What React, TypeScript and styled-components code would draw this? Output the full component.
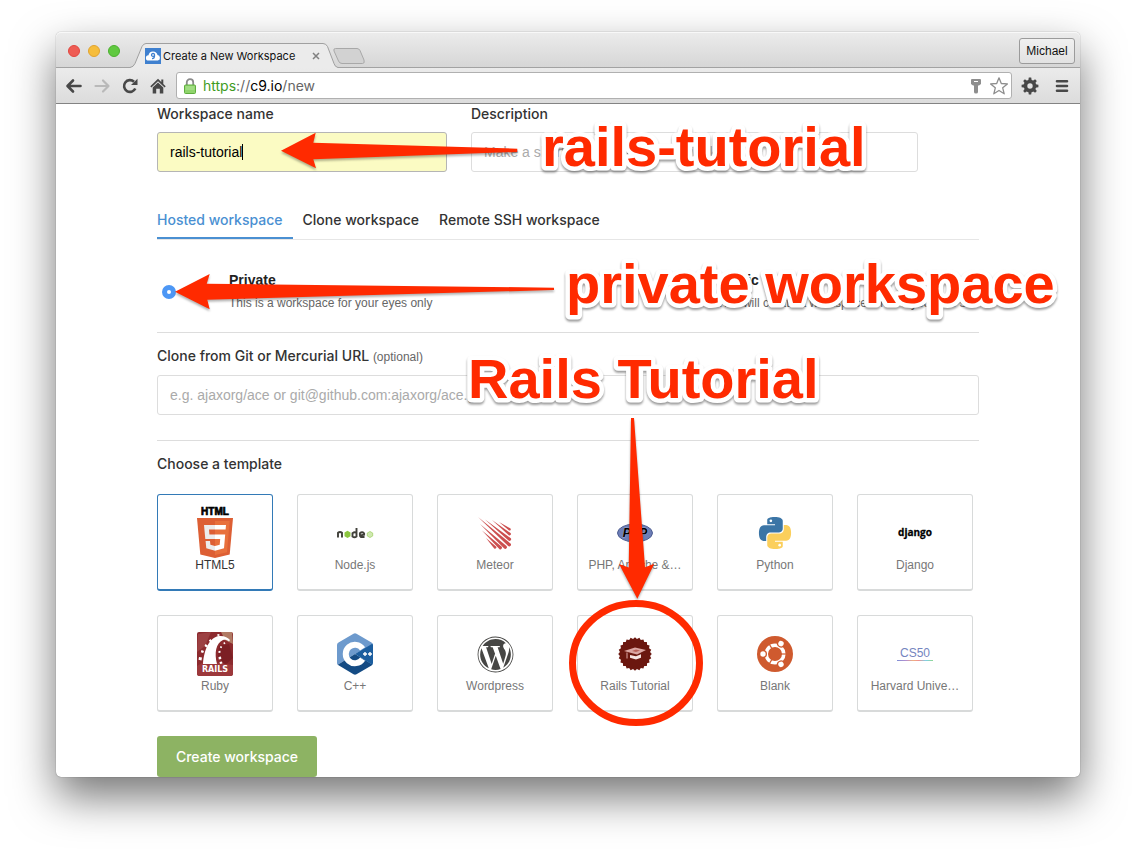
import React, { useState } from "react";
import styled, { createGlobalStyle } from "styled-components";
import { FaWordpress } from "react-icons/fa";

const GlobalStyle = createGlobalStyle`
  *, *::before, *::after { box-sizing: border-box; }
  body {
    margin: 0;
    background: #fff;
    color: #333;
    font-family: "Liberation Sans", Arial, Helvetica, sans-serif;
    font-size: 14px;
    line-height: 20px;
  }
  button, input { font: inherit; color: inherit; }
`;

const Desktop = styled.div`
  padding: 32px 56px 80px;
`;

const BrowserWindow = styled.div`
  position: relative;
  border-radius: 5px;
  background: #fff;
  box-shadow: 0 0 1px rgba(0, 0, 0, 0.6), 0 20px 44px rgba(0, 0, 0, 0.54);
`;

/* ---------- browser chrome ---------- */

const TitleBar = styled.header`
  display: flex;
  align-items: flex-end;
  height: 36px;
  padding: 0 5px 0 12px;
  border-bottom: 1px solid #a2a2a2;
  border-radius: 5px 5px 0 0;
  background: linear-gradient(#ececec, #d6d6d6);
  box-shadow: inset 0 1px 0 #f8f8f8;
`;

const TrafficLights = styled.div`
  display: flex;
  gap: 8px;
  margin: 0 10px 10px 0;
`;

const Light = styled.button<{ $color: string; $edge: string }>`
  width: 12px;
  height: 12px;
  padding: 0;
  border: 1px solid ${(p) => p.$edge};
  border-radius: 50%;
  background: ${(p) => p.$color};
`;

const Tab = styled.div`
  position: relative;
  display: flex;
  align-items: center;
  width: 208px;
  height: 25px;
  margin-bottom: -1px;
  padding: 0 18px 0 15px;
  font-family: Inter, sans-serif;
  font-size: 11px;
  color: #111;
`;

const TabShape = styled.svg`
  position: absolute;
  inset: 0;
`;

const Favicon = styled.svg`
  position: relative;
  margin-right: 2px;
`;

const TabTitle = styled.span`
  position: relative;
  flex: 1;
  white-space: nowrap;
`;

const TabClose = styled.button`
  position: relative;
  display: flex;
  padding: 0;
  border: 0;
  background: none;
`;

const NewTab = styled.button`
  display: flex;
  margin: 0 0 2px -6px;
  padding: 0;
  border: 0;
  background: none;
`;

const ProfileButton = styled.button`
  min-width: 56px;
  height: 26px;
  margin: 0 0 3px auto;
  padding: 0 6px;
  border: 1px solid #9b9b9b;
  border-radius: 3px;
  background: linear-gradient(#f0f0f0, #e2e2e2);
  font-size: 12px;
  color: #111;
`;

const Toolbar = styled.nav`
  display: flex;
  align-items: center;
  height: 36px;
  padding: 0 4px;
  border-bottom: 1px solid #838383;
  background: linear-gradient(#ebebeb, #dcdcdc);
`;

const ToolButton = styled.button`
  display: flex;
  justify-content: center;
  width: 28px;
  padding: 0;
  border: 0;
  background: none;
`;

const TrailingTools = styled.div`
  display: flex;
  align-items: center;
  gap: 4px;
  margin-left: 4px;
`;

const Omnibox = styled.div`
  display: flex;
  flex: 1;
  align-items: center;
  gap: 7px;
  height: 27px;
  margin-left: 4px;
  padding: 0 2px 0 7px;
  border: 1px solid #b0b0b0;
  border-radius: 3px;
  background: #fff;
`;

const Address = styled.div`
  flex: 1;
  font-family: Inter, sans-serif;
  font-size: 14px;
  color: #666;
  outline: none;
`;

const Scheme = styled.span`
  color: #3f9c1f;
`;

const Host = styled.span`
  color: #000;
`;

/* ---------- workspace form ---------- */

const Form = styled.form`
  padding: 0 101px;
`;

const medium = `
  font-family: Inter, sans-serif;
  font-size: 14px;
  font-weight: 500;
  line-height: 20px;
`;

const FieldRow = styled.div`
  display: flex;
  gap: 24px;
  padding-right: 61px;
`;

const Field = styled.div<{ $grow?: number }>`
  flex: ${(p) => p.$grow ?? 1} 1 0;
  min-width: 0;
`;

const FieldLabel = styled.label`
  display: block;
  margin-bottom: 8px;
  ${medium}
`;

const Optional = styled.small`
  font-family: "Liberation Sans", Arial, sans-serif;
  font-size: 12px;
  font-weight: 400;
  color: #666;
`;

const TextInput = styled.input`
  display: block;
  width: 100%;
  height: 40px;
  padding: 0 12px;
  border: 1px solid #ddd;
  border-radius: 3px;
  background: #fff;
  outline: none;
  &::placeholder { color: #aaa; }
`;

const FocusedBox = styled.div`
  display: flex;
  align-items: center;
  height: 40px;
  padding: 0 12px;
  border: 1px solid #b5b5b5;
  border-radius: 3px;
  background: #fbfbc3;
  color: #000;
`;

const BareInput = styled.input`
  field-sizing: content;
  padding: 0;
  border: 0;
  background: none;
  outline: none;
  caret-color: transparent;
`;

const Caret = styled.span`
  width: 1px;
  height: 16px;
  background: #000;
`;

const Tabs = styled.div`
  display: flex;
  margin-top: 38px;
  border-bottom: 1px solid #e6e6e6;
`;

const TabButton = styled.button<{ $active?: boolean }>`
  padding: 0 10px 7px;
  border: 0;
  border-bottom: 2px solid ${(p) => (p.$active ? "#4a90d2" : "transparent")};
  background: none;
  color: ${(p) => (p.$active ? "#4a90d2" : "#333")};
  ${medium}
  &:first-child { padding-left: 0; }
`;

const Section = styled.section<{ $last?: boolean }>`
  padding: 13px 0 ${(p) => (p.$last ? 0 : 25)}px;
  border-bottom: ${(p) => (p.$last ? 0 : 1)}px solid #ddd;
`;

const Visibility = styled.fieldset`
  display: grid;
  grid-template-columns: 3fr 2fr;
  margin: 0;
  padding: 30px 0 19px;
  border: 0;
  border-bottom: 1px solid #ddd;
`;

const Choice = styled.label`
  display: flex;
  align-items: center;
  gap: 53px;
  padding-left: 5px;
  white-space: nowrap;
`;

const Radio = styled.input`
  flex: none;
  appearance: none;
  width: 14px;
  height: 14px;
  margin: 0;
  border: 1px solid #bbb;
  border-radius: 50%;
  background: #fff;
  &:checked { border: 5px solid #4d97f5; }
`;

const ChoiceText = styled.span`
  display: grid;
  gap: 3px;
  font-size: 12px;
  color: #666;
`;

const ChoiceName = styled.strong`
  font-size: 14px;
  color: #222;
`;

const Heading = styled.h2`
  margin: 0 0 20px;
  ${medium}
`;

const TemplateGrid = styled.div`
  display: grid;
  grid-template-columns: repeat(auto-fill, 116px);
  gap: 24px;
`;

const TemplateCard = styled.button<{ $selected?: boolean }>`
  display: flex;
  flex-direction: column;
  align-items: center;
  height: 97px;
  padding: 13px 9px 0;
  border: 1px solid ${(p) => (p.$selected ? "#337ab7" : "#d8dada")};
  border-bottom-width: 2px;
  border-radius: 3px;
  background: #fff;
  font-size: 12px;
  line-height: 14px;
  color: ${(p) => (p.$selected ? "#333" : "#777")};
`;

const LogoArea = styled.span`
  display: flex;
  align-items: center;
  justify-content: center;
  height: 50px;
  svg { overflow: visible; }
`;

const TemplateName = styled.span`
  white-space: nowrap;
`;

const CreateButton = styled.button`
  min-width: 160px;
  height: 41px;
  margin-top: 24px;
  padding: 0 12px;
  border: 0;
  border-radius: 3px;
  background: #8db363;
  color: #fff;
  ${medium}
`;

/* ---------- annotations ---------- */

const Annotations = styled.svg`
  position: absolute;
  top: 0;
  left: 0;
  pointer-events: none;
  overflow: visible;
`;

const Arrow = styled.path`
  fill: #ff2a00;
  filter: drop-shadow(0 2px 1px rgba(0, 0, 0, 0.3));
`;

const Callout = styled.text`
  font: bold 56px "Liberation Sans", Arial, sans-serif;
  fill: #ff2a00;
  stroke: #fff;
  stroke-width: 9px;
  stroke-linejoin: round;
  paint-order: stroke;
  filter: drop-shadow(0 2px 1px rgba(0, 0, 0, 0.4));
`;

/* ---------- logos ---------- */

const Html5Logo = () => (
  <svg width="36" height="50" viewBox="0 0 36 50">
    <text x="18" y="7" textAnchor="middle" fontFamily="Liberation Sans, sans-serif" fontWeight="bold" fontSize="10" fill="#000" stroke="#000" strokeWidth=".7">HTML</text>
    <path fill="#dd5f34" d="M0 10h36l-3.300 36.600L18 50 3.300 46.600z" />
    <path fill="#e8703c" d="M18 13h14.700L30 44.300 18 47z" />
    <path fill="#ececec" d="M7 17h11v4.500h-6l.4 5H18V31H8.300zM8.600 33H13l.4 3.800 4.600 1.300v4.700l-8.700-2.500z" />
    <path fill="#fff" d="M18 17h11l-.4 4.500H18zM18 26.500h10.200L27 40.300l-9 2.500v-4.700l4.700-1.300.5-5.800H18z" />
  </svg>
);

const NodeLogo = () => (
  <svg width="38" height="14" viewBox="0 0 38 14">
    <g fill="none" stroke="#40403a" strokeWidth="1.900">
      <path d="M2 11.500V6.800Q4 5 6 6.800v4.700" />
      <path d="M20.500 2v8.500q-2 1.500-4 0V7.200q2-1.500 4-.4" />
      <path d="M28.500 11h-3.600q-1-.6-1-2V7.300q2.200-2 4.200 0v1.400l-3.600.7" />
    </g>
    <path fill="#8cc63f" d="M11.500 4.800l3 1.700v3.700l-3 1.800-3-1.800V6.500z" />
    <path fill="#cfe9b0" stroke="#a4d26c" strokeWidth=".8" d="M34 5.500l2.700 1.500v3L34 11.500 31.300 10V7z" />
  </svg>
);

const MeteorLogo = () => (
  <svg width="36" height="36" viewBox="0 0 36 36">
    <g fill="#cc4f4f">
      <path d="M1 2L33.500 28.500a1.700 1.700 0 0 1-2.300 2.500z" />
      <path d="M3 9L29.500 31a1.700 1.700 0 0 1-2.300 2.500z" />
      <path d="M8 4.500L33.500 23a1.600 1.600 0 0 1-2 2.500z" />
      <path d="M15 5L33.500 18a1.400 1.400 0 0 1-1.700 2.200z" />
      <path d="M5 15.500L24.500 31.500a1.600 1.600 0 0 1-2.200 2.400z" />
      <path d="M22 7L33.500 13.500a1.200 1.200 0 0 1-1.400 1.900z" />
      <path d="M9 23L19 31.500a1.300 1.300 0 0 1-1.800 1.900z" />
    </g>
  </svg>
);

const PhpLogo = () => (
  <svg width="36" height="20" viewBox="0 0 36 20">
    <ellipse cx="18" cy="10" rx="17.500" ry="9" fill="#6c7eb7" stroke="#4d5d91" />
    <text x="18" y="14" textAnchor="middle" fontFamily="Liberation Sans, sans-serif" fontStyle="italic" fontWeight="bold" fontSize="12" fill="#000" stroke="#9aa5cc" strokeWidth="1" paintOrder="stroke">PHP</text>
  </svg>
);

const PythonLogo = () => (
  <svg width="32" height="32" viewBox="0 0 24 24">
    <path fill="#3b75a6" d="M14.250.18l.9.2.73.26.59.3.45.32.34.34.25.34.16.33.1.3.04.26.02.2-.01.13V8.500l-.05.63-.13.55-.21.46-.26.38-.3.31-.33.25-.35.19-.35.14-.33.1-.3.07-.26.04-.21.02H8.770l-.69.05-.59.14-.5.22-.41.27-.33.32-.27.35-.2.36-.15.37-.1.35-.07.32-.04.27-.02.21v3.060H3.170l-.21-.03-.28-.07-.32-.12-.35-.18-.36-.26-.36-.36-.35-.46-.32-.59-.28-.73-.21-.88-.14-1.050-.05-1.230.06-1.220.16-1.040.24-.87.32-.71.36-.57.4-.44.42-.33.42-.24.4-.16.36-.1.32-.05.24-.01h.16l.06.01h8.160v-.83H6.180l-.01-2.750-.02-.37.05-.34.11-.31.17-.28.25-.26.31-.23.38-.2.44-.18.51-.15.58-.12.64-.1.71-.06.77-.04.84-.02 1.270.05z" />
    <circle cx="8.900" cy="2.900" r="1" fill="#fff" />
    <path fill="#fbcf5c" d="M21.040 6.110l.28.06.32.12.35.18.36.27.36.35.35.47.32.59.28.73.21.88.14 1.040.05 1.230-.06 1.230-.16 1.040-.24.86-.32.71-.36.57-.4.45-.42.33-.42.24-.4.16-.36.09-.32.05-.24.02-.16-.01h-8.220v.82h5.840l.01 2.760.02.36-.05.34-.11.31-.17.29-.25.25-.31.24-.38.2-.44.17-.51.15-.58.13-.64.09-.71.07-.77.04-.84.01-1.270-.04-1.070-.14-.9-.2-.73-.25-.59-.3-.45-.33-.34-.34-.25-.34-.16-.33-.1-.3-.04-.25-.02-.2.01-.13v-5.340l.05-.64.13-.54.21-.46.26-.38.3-.32.33-.24.35-.2.35-.14.33-.1.3-.06.26-.04.21-.02.13-.01h5.840l.69-.05.59-.14.5-.21.41-.28.33-.32.27-.35.2-.36.15-.36.1-.35.07-.32.04-.28.02-.21V6.070h2.090z" />
    <circle cx="15.500" cy="21.100" r="1" fill="#fff" />
  </svg>
);

const DjangoLogo = () => (
  <svg width="38" height="18" viewBox="0 0 38 18">
    <text x="19" y="12" textAnchor="middle" fontFamily="Open Sans, sans-serif" fontWeight="700" fontSize="10" fill="#000" stroke="#000" strokeWidth=".3">django</text>
  </svg>
);

const RailsLogo = () => (
  <svg width="36" height="44" viewBox="0 0 36 44">
    <rect width="36" height="44" rx="2" fill="#8c2a2e" />
    <path fill="#9c4042" d="M1 2L14 0 8 14 0 20z" />
    <path fill="#b07a64" d="M24 0h11l1 12-8-4z" />
    <path fill="#7c1f24" d="M22 14l10-2 4 14-8 7-7-8z" />
    <path fill="#9c383b" d="M0 34l8-5 28 4v9l-2 2H2l-2-2z" />
    <path fill="#fff" d="M6 32C7 17 13 5 22 4c5-.5 9 1.500 11 4l-1 1.500C30 7.500 28 7.500 26 8c-7 3-9 13-6 24z" />
    <g fill="#fff">
      <path d="M2 25l3 .5-.5 3-3-.7zM4.500 18l2.500 1-.8 2-2.400-.8zM8.500 12l2.300 1.400-1.300 2-2-1.400zM13.500 7l1.300 2-1.600 1.300-1.400-1.800zM20.500 2l2 .3-.2 1.600-2-.2zM21.500 25l2.500-.4.3 2.400-2.500.4zM21.500 19l2-.2v2l-2 .3zM23.500 14l1.700.7-.7 1.500-1.600-.6zM27.500 10l1 1.500-1.300.8-1-1.300zM22.500 30l2.500-.6.4 2.200-2.400.4z" />
    </g>
    <text x="18" y="40" textAnchor="middle" fontFamily="DejaVu Sans, sans-serif" fontWeight="bold" fontSize="8" fill="#fff">RAILS</text>
  </svg>
);

const CppLogo = () => (
  <svg width="36" height="42" viewBox="0 0 36 42">
    <path fill="#6d9acd" d="M16.500.8q1.500-.9 3 0L34.500 9.500Q36 10.400 36 12L18 21 .7 31.700Q0 31 0 30V12q0-1.600 1.500-2.500z" />
    <path fill="#144b84" d="M18 21L.7 31.700l15.800 9.500q1.500.9 3 0l15-8.700 1-1z" />
    <path fill="#1c5e9f" d="M36 12v18q0 .9-.7 1.700L18 21 35.300 10.800z" />
    <path fill="none" stroke="#fff" strokeWidth="6" d="M25.600 15.900A9.200 9.200 0 1 0 25.600 26.100" />
    <path stroke="#fff" strokeWidth="1.400" d="M26 21h4M28 19v4M31 21h4M33 19v4" />
  </svg>
);

const points = 24;
const badgePath =
  Array.from({ length: points * 2 }, (_, i) => {
    const r = i % 2 ? 15.2 : 16.8;
    const a = (i * Math.PI) / points;
    return `${i ? "L" : "M"}${(18 + r * Math.cos(a)).toFixed(2)} ${(18 + r * Math.sin(a)).toFixed(2)}`;
  }).join("") + "z";

const RailsTutorialLogo = () => (
  <svg width="36" height="36" viewBox="0 0 36 36">
    <path fill="#6b170f" d={badgePath} />
    <path fill="#dba6a2" d="M7 15l11-3.500L29 14l-9 4.500z" />
    <path fill="#f6e4e2" d="M13 19l6 1.200 5-2v3.600L19 23.500l-6-1.700z" />
    <path fill="none" stroke="#e0aaa6" d="M10 16.500v6" />
    <path fill="#b9615a" d="M15 15l4-1.500 4 1-4 1.500z" />
  </svg>
);

const UbuntuLogo = () => (
  <svg width="36" height="36" viewBox="0 0 36 36">
    <circle cx="18" cy="18" r="18" fill="#cf5a2e" />
    <circle cx="18" cy="18" r="8.800" fill="none" stroke="#fff" strokeWidth="3.600" />
    {[0, 120, 240].map((deg) => (
      <g key={deg} transform={`rotate(${deg} 18 18)`}>
        <circle cx="6" cy="18" r="4" fill="#cf5a2e" />
        <circle cx="6" cy="18" r="2.700" fill="#fff" />
        <path stroke="#cf5a2e" strokeWidth="1.200" d="M24 18h6" />
      </g>
    ))}
  </svg>
);

const Cs50Logo = () => (
  <svg width="36" height="18" viewBox="0 0 36 18">
    <defs>
      <linearGradient id="spectrum">
        <stop offset="0" stopColor="#7f8fd6" />
        <stop offset=".25" stopColor="#b48fd0" />
        <stop offset=".45" stopColor="#f0b080" />
        <stop offset=".6" stopColor="#f09090" />
        <stop offset=".8" stopColor="#80d0e8" />
        <stop offset="1" stopColor="#90d890" />
      </linearGradient>
    </defs>
    <text x="18" y="12" textAnchor="middle" fontFamily="Liberation Sans, sans-serif" fontSize="12" fill="#7585c0">CS50</text>
    <rect y="15" width="36" height="1" fill="url(#spectrum)" />
  </svg>
);

const templates: { name: string; logo: React.ReactNode }[] = [
  { name: "HTML5", logo: <Html5Logo /> },
  { name: "Node.js", logo: <NodeLogo /> },
  { name: "Meteor", logo: <MeteorLogo /> },
  { name: "PHP, Apache &…", logo: <PhpLogo /> },
  { name: "Python", logo: <PythonLogo /> },
  { name: "Django", logo: <DjangoLogo /> },
  { name: "Ruby", logo: <RailsLogo /> },
  { name: "C++", logo: <CppLogo /> },
  { name: "Wordpress", logo: <FaWordpress size={37} color="#464644" /> },
  { name: "Rails Tutorial", logo: <RailsTutorialLogo /> },
  { name: "Blank", logo: <UbuntuLogo /> },
  { name: "Harvard Unive…", logo: <Cs50Logo /> },
];

const Chrome = () => (
  <>
    <TitleBar>
      <TrafficLights>
        <Light type="button" aria-label="Close" $color="#ee5c54" $edge="#e2463f" />
        <Light type="button" aria-label="Minimize" $color="#f6bd3b" $edge="#e1a32f" />
        <Light type="button" aria-label="Zoom" $color="#60c940" $edge="#4bb02e" />
      </TrafficLights>
      <Tab>
        <TabShape width="208" height="25" viewBox="0 0 208 25">
          <path fill="#ebebeb" d="M0 25L0 24.500Q3.500 24 5 20.500L12 3.500Q13.500.5 16 .5H193Q196 .5 197.500 3.500L204 20.500Q205 24 208 24.500V25z" />
          <path fill="none" stroke="#a0a0a0" d="M0 24.500Q3.500 24 5 20.500L12 3.500Q13.500.5 16 .5H193Q196 .5 197.500 3.500L204 20.500Q205 24 208 24.500" />
        </TabShape>
        <Favicon width="16" height="16" viewBox="0 0 16 16">
          <rect width="16" height="16" fill="#3f80cf" />
          <path fill="#fff" d="M3.500 12.500a2.600 2.600 0 0 1 0-5.200 4.600 4.600 0 0 1 9-.3 2.800 2.800 0 0 1 .3 5.500z" />
          <path fill="none" stroke="#3f80cf" strokeWidth="1.300" d="M9.500 6.700a1.500 1.500 0 1 0-.3 1.200M9.500 6.500v1.500q0 2.500-2.500 2.700" />
        </Favicon>
        <TabTitle>Create a New Workspace</TabTitle>
        <TabClose type="button" aria-label="Close tab">
          <svg width="8" height="8" viewBox="0 0 8 8"><path stroke="#808080" strokeWidth="1.500" d="M1 1l6 6M7 1L1 7" /></svg>
        </TabClose>
      </Tab>
      <NewTab type="button" aria-label="New tab">
        <svg width="34" height="18" viewBox="0 0 34 18">
          <path fill="#d2d2d2" stroke="#a8a8a8" d="M3.500 1.500H25Q27 1.500 28 3.500L32 13Q33 16.500 30.500 16.500H10Q7.500 16.500 6.500 14L2 4Q1.200 1.500 3.500 1.500z" />
        </svg>
      </NewTab>
      <ProfileButton type="button">Michael</ProfileButton>
    </TitleBar>
    <Toolbar>
      <ToolButton type="button" aria-label="Back">
        <svg width="18" height="16" viewBox="0 0 18 16"><path fill="none" stroke="#484848" strokeWidth="2.600" strokeLinejoin="round" strokeLinecap="round" d="M15.500 8H3M8 2.500L2.500 8 8 13.500" /></svg>
      </ToolButton>
      <ToolButton type="button" aria-label="Forward">
        <svg width="18" height="16" viewBox="0 0 18 16"><path fill="none" stroke="#b9b9b9" strokeWidth="2.200" strokeLinejoin="round" strokeLinecap="round" d="M2.500 8H15M10 2.500L15.500 8 10 13.500" /></svg>
      </ToolButton>
      <ToolButton type="button" aria-label="Reload">
        <svg width="18" height="16" viewBox="0 0 18 16"><path fill="none" stroke="#484848" strokeWidth="2.600" d="M14.300 10.500A5.900 5.900 0 1 1 13 3.700" /><path fill="#484848" d="M16.500.8V7H10z" /></svg>
      </ToolButton>
      <ToolButton type="button" aria-label="Home">
        <svg width="16" height="16" viewBox="0 0 16 16"><path fill="#484848" d="M8 .8l3.300 3.200V1.500h2v4.400L15.700 8.300l-1.100 1.200L8 3.300 1.400 9.500.3 8.300zM8 4.500l5.300 5V15.500H9.800v-4.800H6.200v4.800H2.700v-6z" /></svg>
      </ToolButton>
      <Omnibox>
        <svg width="12" height="16" viewBox="0 0 12 16">
          <path fill="none" stroke="#8b8b8b" strokeWidth="1.800" d="M2.800 8V4.300a3.200 3.200 0 0 1 6.400 0V8" />
          <rect x=".5" y="7" width="11" height="8.500" rx="1" fill="#8fd46c" stroke="#5fae3e" />
          <path stroke="#b3e69a" d="M1.500 9h9M1.500 11h9" />
        </svg>
        <Address role="textbox" aria-label="Address" contentEditable suppressContentEditableWarning spellCheck={false}>
          <Scheme>https</Scheme>://<Host>c9.io</Host>/new
        </Address>
        <svg width="12" height="16" viewBox="0 0 12 16">
          <path fill="#8e8e8e" d="M2 1h8q1 0 1 1v4L9 7.500H8V14q0 1.500-2 1.500T4 14V7.500H3L1 6V2q0-1 1-1z" /><path stroke="#fff" d="M4 3.500h4" />
        </svg>
        <svg width="20" height="20" viewBox="0 0 20 20">
          <path fill="#fff" stroke="#8e8e8e" strokeWidth="1.300" strokeLinejoin="round" d="M10 1.800l2.300 5.700 6.100.4-4.700 3.900 1.500 6L10 14.500l-5.200 3.300 1.500-6L1.600 7.900l6.100-.4z" />
        </svg>
      </Omnibox>
      <TrailingTools>
        <ToolButton type="button" aria-label="Settings">
          <svg width="18" height="18" viewBox="0 0 18 18">
            <circle cx="9" cy="9" r="4.500" fill="none" stroke="#484848" strokeWidth="3.600" />
            {[0, 45, 90, 135, 180, 225, 270, 315].map((deg) => (
              <path key={deg} fill="#484848" d="M7.200 4L7.800.6h2.400L10.800 4z" transform={`rotate(${deg} 9 9)`} />
            ))}
          </svg>
        </ToolButton>
        <ToolButton type="button" aria-label="Menu">
          <svg width="14" height="14" viewBox="0 0 14 14"><path stroke="#484848" strokeWidth="2.600" strokeLinecap="round" d="M2 2.200h10M2 7h10M2 11.800h10" /></svg>
        </ToolButton>
      </TrailingTools>
    </Toolbar>
  </>
);

export default function App() {
  const [name, setName] = useState("rails-tutorial");
  const [tab, setTab] = useState(0);
  const [selected, setSelected] = useState("HTML5");

  return (
    <Desktop>
      <GlobalStyle />
      <BrowserWindow>
        <Chrome />
        <Form onSubmit={(e) => e.preventDefault()}>
          <FieldRow>
            <Field $grow={290}>
              <FieldLabel htmlFor="name">Workspace name</FieldLabel>
              <FocusedBox>
                <BareInput id="name" value={name} onChange={(e) => setName(e.target.value)} />
                <Caret />
              </FocusedBox>
            </Field>
            <Field $grow={447}>
              <FieldLabel htmlFor="description">Description</FieldLabel>
              <TextInput id="description" placeholder="Make a short description of your workspace" />
            </Field>
          </FieldRow>

          <Tabs role="tablist">
            {["Hosted workspace", "Clone workspace", "Remote SSH workspace"].map((label, i) => (
              <TabButton key={label} type="button" role="tab" aria-selected={tab === i} $active={tab === i} onClick={() => setTab(i)}>
                {label}
              </TabButton>
            ))}
          </Tabs>

          <Visibility>
            <Choice>
              <Radio type="radio" name="visibility" defaultChecked />
              <ChoiceText>
                <ChoiceName>Private</ChoiceName>
                This is a workspace for your eyes only
              </ChoiceText>
            </Choice>
            <Choice>
              <Radio type="radio" name="visibility" />
              <ChoiceText>
                <ChoiceName>Public</ChoiceName>
                This will create a workspace for everybody to see
              </ChoiceText>
            </Choice>
          </Visibility>

          <Section>
            <FieldLabel htmlFor="clone-url">
              Clone from Git or Mercurial URL <Optional>(optional)</Optional>
            </FieldLabel>
            <TextInput id="clone-url" placeholder="e.g. ajaxorg/ace or git@github.com:ajaxorg/ace.git" />
          </Section>

          <Section $last>
            <Heading>Choose a template</Heading>
            <TemplateGrid>
              {templates.map((t) => (
                <TemplateCard key={t.name} type="button" aria-pressed={selected === t.name} $selected={selected === t.name} onClick={() => setSelected(t.name)}>
                  <LogoArea>{t.logo}</LogoArea>
                  <TemplateName>{t.name}</TemplateName>
                </TemplateCard>
              ))}
            </TemplateGrid>
            <CreateButton type="submit">Create workspace</CreateButton>
          </Section>
        </Form>

        <Annotations width="1024" height="745" viewBox="56 32 1024 745">
          <Arrow d="M281 150.700L315.700 132.700 313.300 142.700 517.300 148.700V152L313.300 159.300 316 168.300z" />
          <Arrow d="M175 291.700L209.700 274 206.700 283.700 554 287.700V290L207.300 299.700 209.700 309.300z" />
          <Arrow d="M637.300 598.700L619 564 628.700 567.500 631 418H634L645 567.300 654.300 563.700z" />
          <ellipse cx="636" cy="663" rx="63.500" ry="59.500" fill="none" stroke="#ff2a00" strokeWidth="7" />
          <Callout x="542" y="166">rails-tutorial</Callout>
          <Callout x="566" y="303">private workspace</Callout>
          <Callout x="468" y="398">Rails Tutorial</Callout>
        </Annotations>
      </BrowserWindow>
    </Desktop>
  );
}
